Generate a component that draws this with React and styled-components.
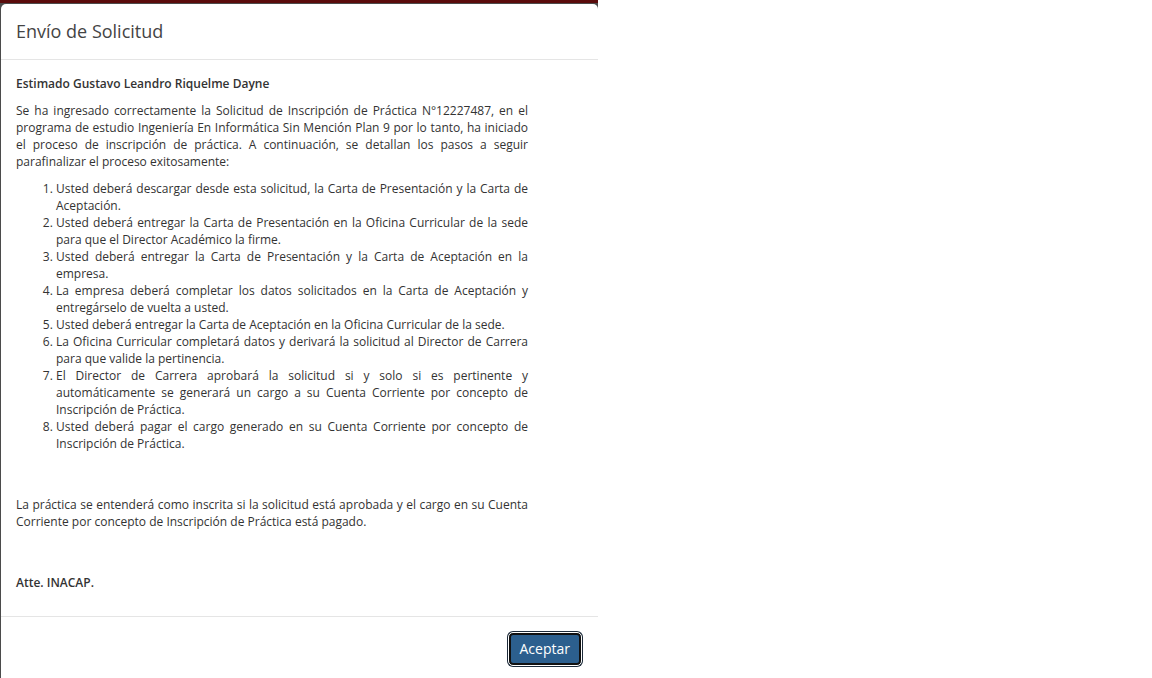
import React from 'react'
import styled, { createGlobalStyle } from 'styled-components'

const Global = createGlobalStyle`
  html, body {
    margin: 0;
    padding: 0;
    background: #fff;
  }
  body {
    font-family: "Open Sans", "Liberation Sans", sans-serif;
    font-size: 12px;
    line-height: 17px;
    color: #333;
  }
`

const Page = styled.div`
  display: flex;
  width: 1152px;
  height: 678px;
  overflow: hidden;
`

const Backdrop = styled.div`
  width: 598px;
  height: 678px;
  background: #4b4b4b;
  border-top: 3px solid #5a0b0b;
  box-sizing: border-box;
  padding-left: 1px;
`

const Modal = styled.div`
  width: 597px;
  background: #fff;
  border-radius: 5px 5px 0 0;
  margin-top: 1px;
  display: flex;
  flex-direction: column;
`

const Header = styled.div`
  padding: 15px;
  border-bottom: 1px solid #e5e5e5;
`

const Title = styled.h4`
  margin: 0;
  font-size: 18px;
  font-weight: 400;
  line-height: 25px;
  color: #444;
`

const Body = styled.div`
  padding: 15px;
`

const Letter = styled.div`
  max-width: 512px;
  text-align: justify;
`

const P = styled.p`
  margin: 0 0 ${p => p.$after || 10}px;
  font-weight: ${p => (p.$strong ? 600 : 400)};
`

const Steps = styled.ol`
  margin: 0 0 ${p => p.$after || 10}px;
  padding-left: 40px;
`

const Step = styled.li`
  text-align: justify;
`

const Footer = styled.div`
  padding: 15px;
  border-top: 1px solid #e5e5e5;
  display: flex;
  justify-content: flex-end;
`

const Button = styled.button`
  font-family: "Open Sans", "Liberation Sans", sans-serif;
  font-size: 14px;
  line-height: 20px;
  padding: 4px 9px;
  color: #fff;
  background: #2c5f8e;
  border: 2px solid #111;
  border-radius: 4px;
  outline: 1px solid #fff;
  box-shadow: 0 0 0 2px #1d2b3a;
  margin-right: 2px;
  margin-top: 1px;
  cursor: pointer;
`

const steps = [
  'Usted deberá descargar desde esta solicitud, la Carta de Presentación y la Carta de Aceptación.',
  'Usted deberá entregar la Carta de Presentación en la Oficina Curricular de la sede para que el Director Académico la firme.',
  'Usted deberá entregar la Carta de Presentación y la Carta de Aceptación en la empresa.',
  'La empresa deberá completar los datos solicitados en la Carta de Aceptación y entregárselo de vuelta a usted.',
  'Usted deberá entregar la Carta de Aceptación en la Oficina Curricular de la sede.',
  'La Oficina Curricular completará datos y derivará la solicitud al Director de Carrera para que valide la pertinencia.',
  'El Director de Carrera aprobará la solicitud si y solo si es pertinente y automáticamente se generará un cargo a su Cuenta Corriente por concepto de Inscripción de Práctica.',
  'Usted deberá pagar el cargo generado en su Cuenta Corriente por concepto de Inscripción de Práctica.',
]

export default function App() {
  return (
    <Page>
      <Global />
      <Backdrop>
        <Modal>
          <Header>
            <Title>Envío de Solicitud</Title>
          </Header>
          <Body>
            <Letter>
              <P $strong>Estimado Gustavo Leandro Riquelme Dayne</P>
              <P>
                Se ha ingresado correctamente la Solicitud de Inscripción de Práctica N°12227487, en el
                programa de estudio Ingeniería En Informática Sin Mención Plan 9 por lo tanto, ha iniciado
                el proceso de inscripción de práctica. A continuación, se detallan los pasos a seguir
                parafinalizar el proceso exitosamente:
              </P>
              <Steps $after={44}>
                {steps.map(s => (
                  <Step key={s}>{s}</Step>
                ))}
              </Steps>
              <P $after={44}>
                La práctica se entenderá como inscrita si la solicitud está aprobada y el cargo en su Cuenta
                Corriente por concepto de Inscripción de Práctica está pagado.
              </P>
              <P $strong>Atte. INACAP.</P>
            </Letter>
          </Body>
          <Footer>
            <Button>Aceptar</Button>
          </Footer>
        </Modal>
      </Backdrop>
    </Page>
  )
}
